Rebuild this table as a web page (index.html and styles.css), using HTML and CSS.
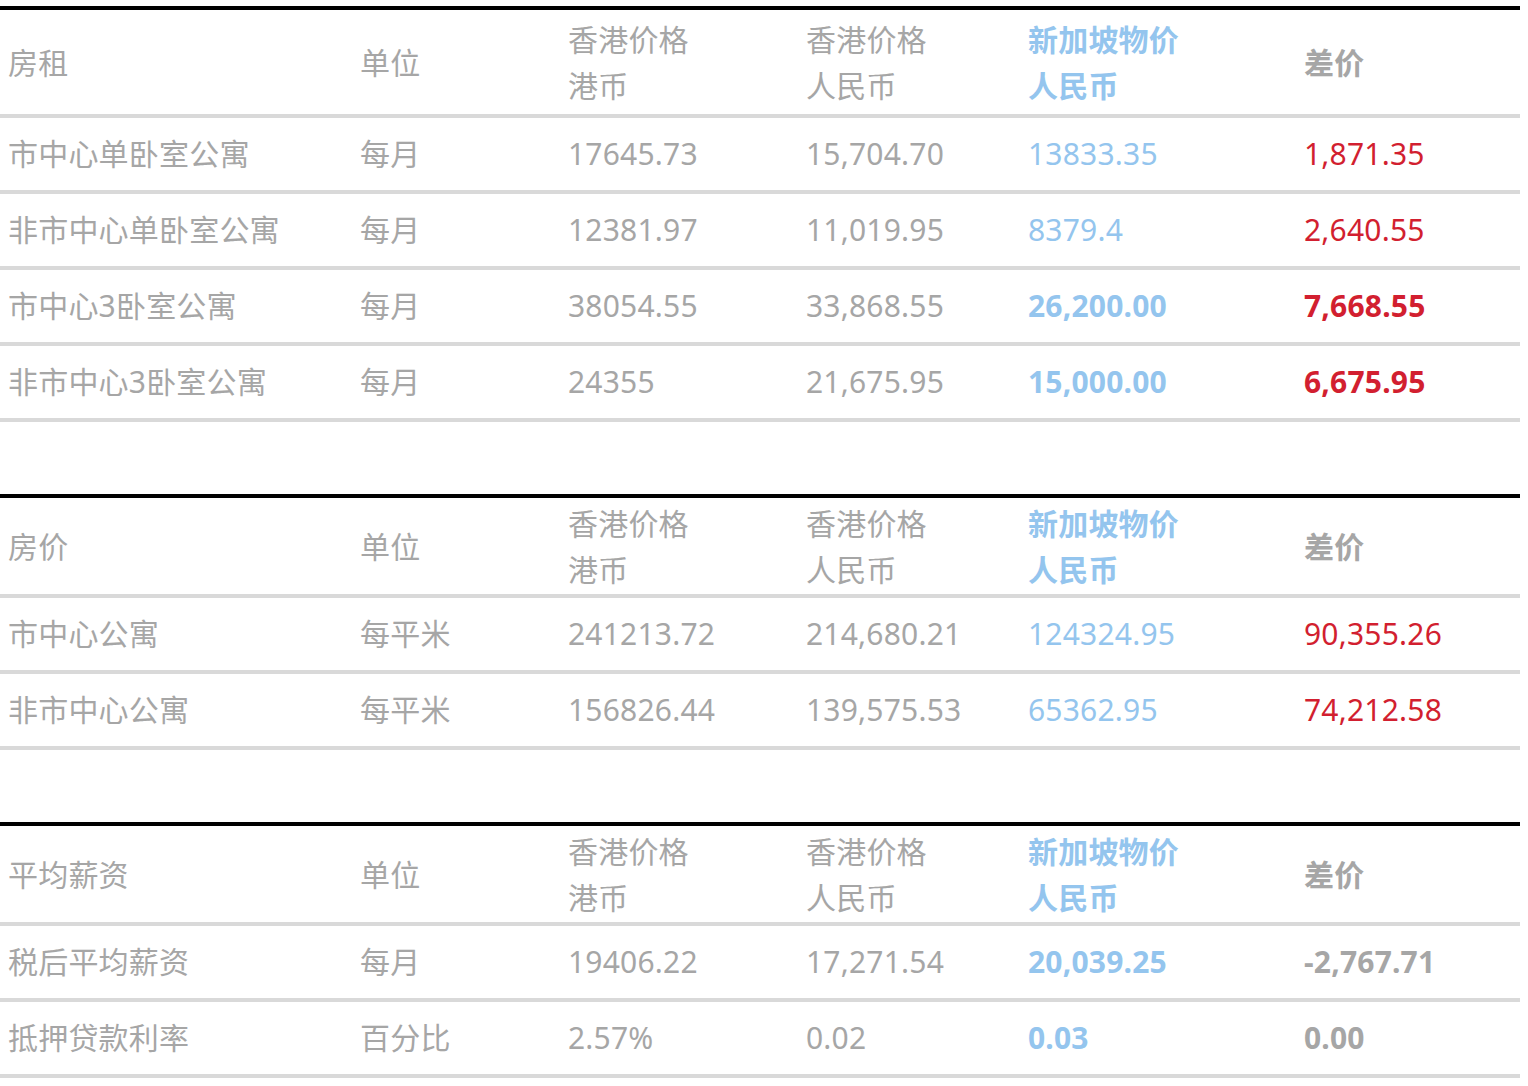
FILE: index.html
```html
<!DOCTYPE html>
<html lang="zh">
<head>
<meta charset="utf-8">
<title>香港 新加坡 物价对比</title>
<link rel="stylesheet" href="styles.css">
</head>
<body>
<div class="page">
  <table class="cmp cmp-first">
    <colgroup><col class="c1"><col class="c2"><col class="c3"><col class="c4"><col class="c5"><col class="c6"></colgroup>
    <thead>
      <tr>
        <th>房租</th><th>单位</th><th>香港价格<br>港币</th><th>香港价格<br>人民币</th><th class="sg b">新加坡物价<br>人民币</th><th class="b">差价</th>
      </tr>
    </thead>
    <tbody>
      <tr><td>市中心单卧室公寓</td><td>每月</td><td>17645.73</td><td>15,704.70</td><td class="sg">13833.35</td><td class="red">1,871.35</td></tr>
      <tr><td>非市中心单卧室公寓</td><td>每月</td><td>12381.97</td><td>11,019.95</td><td class="sg">8379.4</td><td class="red">2,640.55</td></tr>
      <tr><td>市中心3卧室公寓</td><td>每月</td><td>38054.55</td><td>33,868.55</td><td class="sg b">26,200.00</td><td class="red b">7,668.55</td></tr>
      <tr><td>非市中心3卧室公寓</td><td>每月</td><td>24355</td><td>21,675.95</td><td class="sg b">15,000.00</td><td class="red b">6,675.95</td></tr>
    </tbody>
  </table>

  <table class="cmp">
    <colgroup><col class="c1"><col class="c2"><col class="c3"><col class="c4"><col class="c5"><col class="c6"></colgroup>
    <thead>
      <tr>
        <th>房价</th><th>单位</th><th>香港价格<br>港币</th><th>香港价格<br>人民币</th><th class="sg b">新加坡物价<br>人民币</th><th class="b">差价</th>
      </tr>
    </thead>
    <tbody>
      <tr><td>市中心公寓</td><td>每平米</td><td>241213.72</td><td>214,680.21</td><td class="sg">124324.95</td><td class="red">90,355.26</td></tr>
      <tr><td>非市中心公寓</td><td>每平米</td><td>156826.44</td><td>139,575.53</td><td class="sg">65362.95</td><td class="red">74,212.58</td></tr>
    </tbody>
  </table>

  <table class="cmp">
    <colgroup><col class="c1"><col class="c2"><col class="c3"><col class="c4"><col class="c5"><col class="c6"></colgroup>
    <thead>
      <tr>
        <th>平均薪资</th><th>单位</th><th>香港价格<br>港币</th><th>香港价格<br>人民币</th><th class="sg b">新加坡物价<br>人民币</th><th class="b">差价</th>
      </tr>
    </thead>
    <tbody>
      <tr><td>税后平均薪资</td><td>每月</td><td>19406.22</td><td>17,271.54</td><td class="sg b">20,039.25</td><td class="b">-2,767.71</td></tr>
      <tr><td>抵押贷款利率</td><td>百分比</td><td>2.57%</td><td>0.02</td><td class="sg b">0.03</td><td class="b">0.00</td></tr>
    </tbody>
  </table>
</div>
</body>
</html>
```

FILE: styles.css
```css
html, body {
  margin: 0;
  padding: 0;
  background: #ffffff;
}

.page {
  padding: 6px 8px 0 0;
  font-family: "Noto Sans", "Noto Sans CJK SC", sans-serif;
  color: #a6a6a6;
}

.cmp {
  width: 1520px;
  table-layout: fixed;
  border-collapse: collapse;
  margin: 0 0 72px 0;
  font-size: 30px;
  letter-spacing: 0.2px;
}

.cmp:last-child {
  margin-bottom: 0;
}

.c1 { width: 352px; }
.c2 { width: 208px; }
.c3 { width: 238px; }
.c4 { width: 222px; }
.c5 { width: 276px; }
.c6 { width: 224px; }

.cmp thead tr {
  border-top: 4px solid #000000;
}

.cmp th {
  height: 94px;
  padding: 2px 0 0 8px;
  text-align: left;
  vertical-align: middle;
  font-weight: normal;
  line-height: 46px;
  border-bottom: 4px solid #d9d9d9;
  white-space: nowrap;
}

.cmp-first th {
  height: 102px;
}

.cmp td {
  height: 72px;
  padding: 0 0 0 8px;
  text-align: left;
  vertical-align: middle;
  line-height: 34px;
  border-bottom: 4px solid #d9d9d9;
  white-space: nowrap;
}

.cmp .sg { color: #94c5ee; }
.cmp .red { color: #d21f30; }
.cmp .b { font-weight: bold; }
```
